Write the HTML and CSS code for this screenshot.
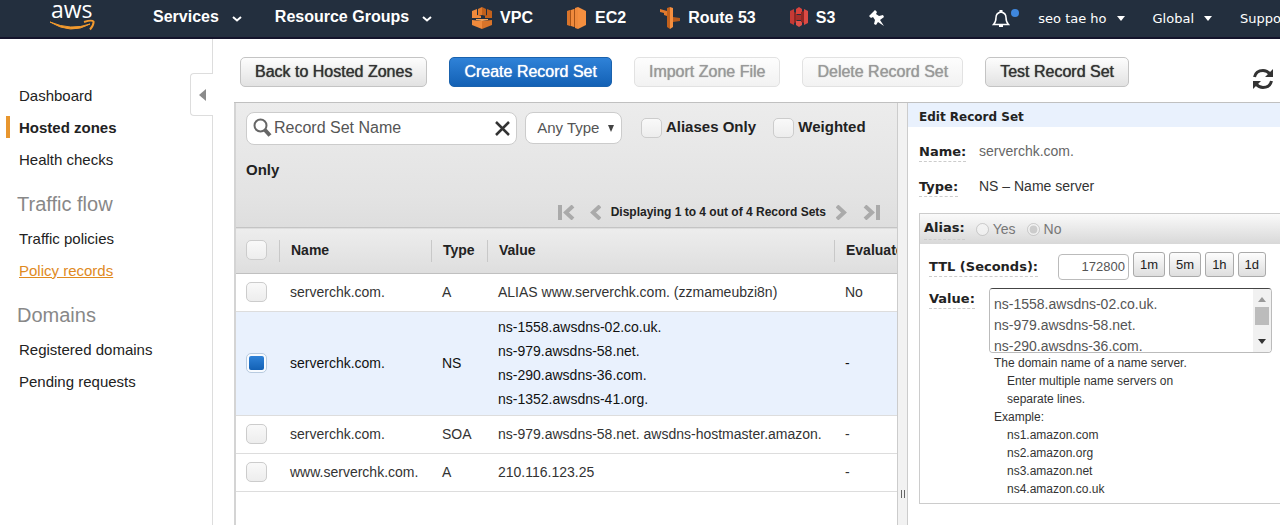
FILE: index.html
```html
<!DOCTYPE html>
<html lang="en">
<head>
<meta charset="utf-8">
<title>Route 53 Console</title>
<link rel="stylesheet" href="styles.css">
</head>
<body>
<header class="topbar">
  <a class="logo" href="#" aria-label="aws">
    <svg width="46" height="34" viewBox="0 0 46 34">
      <text class="logo-text" x="2" y="18">aws</text>
      <path d="M1 22Q22 35 41 24Q22 31 1 22Z" fill="#f29a2e" stroke="#f29a2e" stroke-width="1"/>
      <path d="M35 22Q43 19.500 44.500 21.500Q45 25 41 29.500" fill="none" stroke="#f29a2e" stroke-width="2"/>
    </svg>
  </a>
  <nav class="menus">
    <button class="menu" type="button">Services <svg class="chev" width="10" height="6" viewBox="0 0 10 6"><path d="M1 1L5 4.500L9 1" fill="none" stroke="#fff" stroke-width="2"/></svg></button>
    <button class="menu" type="button">Resource Groups <svg class="chev" width="10" height="6" viewBox="0 0 10 6"><path d="M1 1L5 4.500L9 1" fill="none" stroke="#fff" stroke-width="2"/></svg></button>
  </nav>
  <nav class="shortcuts">
    <a class="short" href="#">
      <svg width="20" height="22" viewBox="0 0 20 22"><path d="M6 2L10 0V8L6 9Z" fill="#e17a2c"/><path d="M10 0L14 2V9L10 8Z" fill="#c2611c"/><path d="M0 4L5 2V8L9 9V11H0Z" fill="#f08a3c"/><path d="M0 13L10 14V22L0 18Z" fill="#f08a3c"/><path d="M15 2L20 4V11H13V9L15 8Z" fill="#c2611c"/><path d="M20 13L10 14V22L20 18Z" fill="#d9742a"/><path d="M4 12H16V13L10 14L4 13Z" fill="#f6a55c"/></svg>VPC</a>
    <a class="short" href="#">
      <svg width="20" height="22" viewBox="0 0 20 22"><path d="M0 4L3 3V19L0 18Z" fill="#d9742a"/><path d="M4 3L7 2V20L4 19Z" fill="#f08a3c"/><path d="M8 1L11 0V22L8 21Z" fill="#f08a3c"/><path d="M11 0L19 4V18L11 22Z" fill="#f58f3f"/><path d="M3 3H4V19H3ZM7 2H8V20H7Z" fill="#a65318"/></svg>EC2</a>
    <a class="short" href="#">
      <svg width="20" height="22" viewBox="0 0 20 22"><path d="M0 2L7 4V9L4 8V6L0 5Z" fill="#e27b2e"/><path d="M7 1L10 0V22L7 20Z" fill="#c2611c"/><path d="M10 0L13 1V20L10 22Z" fill="#f58f3f"/><path d="M13 10L20 11V14L13 15Z" fill="#b4591a"/></svg>Route 53</a>
    <a class="short" href="#">
      <svg width="18" height="21" viewBox="0 0 18 21"><path d="M0 4L4 2V18L0 16Z" fill="#c53a35"/><path d="M4 5L7 6V15L4 16Z" fill="#8f2723"/><path d="M6 2L9 0L12 2V7H6Z" fill="#d9433d"/><path d="M6 8H12V13H6Z" fill="#a82f2a"/><path d="M6 14H12V18L9 20L6 18Z" fill="#e0524b"/><path d="M11 5L14 4V16L11 15Z" fill="#8f2723"/><path d="M14 2L18 4V16L14 18Z" fill="#dc4a44"/></svg>S3</a>
    <button class="icon-btn" type="button" aria-label="Edit shortcuts"><svg width="16" height="16" viewBox="0 0 16 16"><path d="M6 0L8 2L7 4L10 6L14 5L15 7L11 10L15 16L9 12L7 15L5 14L6 10L4 7L2 8L0 6Z" fill="#fff"/></svg></button>
  </nav>
  <div class="account">
    <button class="icon-btn bell" type="button" aria-label="Notifications"><svg width="18" height="18" viewBox="0 0 18 18"><path d="M1.500 14.500Q4 12 4 7.500Q4 3 9 2Q14 3 14 7.500Q14 12 16.500 14.500Z" fill="none" stroke="#fff" stroke-width="1.500"/><path d="M7.500 2V0H10.500V2ZM7 15H11V17H7Z" fill="#fff"/></svg><span class="dot"></span></button>
    <button class="acct" type="button">seo tae ho <svg width="8" height="5" viewBox="0 0 8 5"><path d="M0 0H8L4 5Z" fill="#fff"/></svg></button>
    <button class="acct" type="button">Global <svg width="8" height="5" viewBox="0 0 8 5"><path d="M0 0H8L4 5Z" fill="#fff"/></svg></button>
    <button class="acct" type="button">Support</button>
  </div>
</header>

<div class="page">
  <aside class="sidebar">
    <button class="collapse" type="button" aria-label="Collapse navigation"><svg width="7" height="12" viewBox="0 0 7 12"><path d="M7 0V12L0 6Z" fill="#8b8b8b"/></svg></button>
    <nav class="side-nav">
      <a href="#">Dashboard</a>
      <a class="current" href="#">Hosted zones</a>
      <a href="#">Health checks</a>
      <h2>Traffic flow</h2>
      <a href="#">Traffic policies</a>
      <a class="hover" href="#">Policy records</a>
      <h2>Domains</h2>
      <a href="#">Registered domains</a>
      <a href="#">Pending requests</a>
    </nav>
  </aside>

  <main class="main">
    <div class="toolbar">
      <button class="btn" type="button">Back to Hosted Zones</button>
      <button class="btn primary" type="button">Create Record Set</button>
      <button class="btn" type="button" disabled>Import Zone File</button>
      <button class="btn" type="button" disabled>Delete Record Set</button>
      <button class="btn" type="button">Test Record Set</button>
      <button class="icon-btn refresh" type="button" aria-label="Refresh"><svg width="22" height="22" viewBox="0 0 22 22"><path d="M2.500 9Q4 2.500 11 2.500Q15 2.500 18 6M19.500 13Q18 19.500 11 19.500Q7 19.500 4 16" fill="none" stroke="#333" stroke-width="3"/><path d="M21 1V9H13ZM1 21V13H9Z" fill="#333"/></svg></button>
    </div>

    <div class="split">
      <section class="list">
        <div class="filters">
          <div class="search">
            <svg width="19" height="20" viewBox="0 0 19 20"><circle cx="7.500" cy="7.500" r="6" fill="none" stroke="#666" stroke-width="2"/><path d="M12 12L17 17.500" stroke="#666" stroke-width="4"/></svg>
            <input type="text" placeholder="Record Set Name" aria-label="Record Set Name">
            <button class="icon-btn" type="button" aria-label="Clear"><svg width="15" height="15" viewBox="0 0 15 15"><path d="M1 1L14 14M14 1L1 14" stroke="#333" stroke-width="2.500"/></svg></button>
          </div>
          <span class="select"><select aria-label="Record type"><option>Any Type</option></select><svg width="6" height="7" viewBox="0 0 6 7"><path d="M0 0H6L3 7Z" fill="#444"/></svg></span>
          <label><input class="check" type="checkbox"> Aliases Only</label>
          <label><input class="check" type="checkbox"> Weighted Only</label>
        </div>
        <div class="pager">
          <button class="icon-btn" type="button" aria-label="First page"><svg width="17" height="15" viewBox="0 0 17 15"><path d="M2 0V15M15 1L8 7.500L15 14" fill="none" stroke="#aaa" stroke-width="4"/></svg></button>
          <button class="icon-btn" type="button" aria-label="Previous page"><svg width="11" height="15" viewBox="0 0 11 15"><path d="M10 1L3 7.500L10 14" fill="none" stroke="#aaa" stroke-width="4"/></svg></button>
          <span>Displaying 1 to 4 out of 4 Record Sets</span>
          <button class="icon-btn" type="button" aria-label="Next page"><svg width="11" height="15" viewBox="0 0 11 15"><path d="M1 1L8 7.500L1 14" fill="none" stroke="#aaa" stroke-width="4"/></svg></button>
          <button class="icon-btn" type="button" aria-label="Last page"><svg width="17" height="15" viewBox="0 0 17 15"><path d="M15 0V15M2 1L9 7.500L2 14" fill="none" stroke="#aaa" stroke-width="4"/></svg></button>
        </div>
        <table class="records">
          <colgroup><col class="c-check"><col class="c-name"><col class="c-type"><col class="c-value"><col class="c-eval"></colgroup>
          <thead>
            <tr><th><input class="check" type="checkbox" aria-label="Select all"></th><th>Name</th><th>Type</th><th>Value</th><th>Evaluate</th></tr>
          </thead>
          <tbody>
            <tr><td><input class="check" type="checkbox" aria-label="Select record 1"></td><td>serverchk.com.</td><td>A</td><td>ALIAS www.serverchk.com. (zzmameubzi8n)</td><td>No</td></tr>
            <tr class="selected"><td><input class="check" type="checkbox" aria-label="Select record 2" checked></td><td>serverchk.com.</td><td>NS</td><td>ns-1558.awsdns-02.co.uk.<br>ns-979.awsdns-58.net.<br>ns-290.awsdns-36.com.<br>ns-1352.awsdns-41.org.</td><td>-</td></tr>
            <tr><td><input class="check" type="checkbox" aria-label="Select record 3"></td><td>serverchk.com.</td><td>SOA</td><td>ns-979.awsdns-58.net. awsdns-hostmaster.amazon.</td><td>-</td></tr>
            <tr><td><input class="check" type="checkbox" aria-label="Select record 4"></td><td>www.serverchk.com.</td><td>A</td><td>210.116.123.25</td><td>-</td></tr>
          </tbody>
        </table>
      </section>

      <div class="splitter"><span></span></div>

      <form class="editor">
        <h1>Edit Record Set</h1>
        <div class="field"><span class="key"><b>Name:</b></span><span class="muted">serverchk.com.</span></div>
        <div class="field"><span class="key"><b>Type:</b></span><span>NS – Name server</span></div>
        <div class="box">
          <div class="alias">
            <b>Alias:</b>
            <label><input type="radio" name="alias" disabled>Yes</label>
            <label><input type="radio" name="alias" disabled checked>No</label>
          </div>
          <div class="ttl">
            <label for="ttl"><b>TTL (Seconds):</b></label>
            <input id="ttl" type="text" value="172800">
            <button type="button">1m</button>
            <button type="button">5m</button>
            <button type="button">1h</button>
            <button type="button">1d</button>
          </div>
          <div class="value">
            <label for="value"><b>Value:</b></label>
            <div class="value-body">
              <div class="area">
                <textarea id="value">ns-1558.awsdns-02.co.uk.
ns-979.awsdns-58.net.
ns-290.awsdns-36.com.
ns-1352.awsdns-41.org.</textarea>
                <div class="scroll">
                  <svg width="8" height="5" viewBox="0 0 8 5"><path d="M0 5H8L4 0Z" fill="#999"/></svg>
                  <span class="thumb"></span>
                  <svg class="down" width="8" height="5" viewBox="0 0 8 5"><path d="M0 0H8L4 5Z" fill="#333"/></svg>
                </div>
              </div>
              <div class="help">
                <p>The domain name of a name server.</p>
                <p class="indent">Enter multiple name servers on<br>separate lines.</p>
                <p>Example:</p>
                <p class="indent">ns1.amazon.com<br>ns2.amazon.org<br>ns3.amazon.net<br>ns4.amazon.co.uk</p>
              </div>
            </div>
          </div>
        </div>
      </form>
    </div>
  </main>
</div>
</body>
</html>
```
FILE: styles.css
```css
* { box-sizing: border-box; }
html, body { height: 100%; }
body {
  margin: 0;
  display: flex;
  flex-direction: column;
  overflow: hidden;
  background: #fff;
  color: #333;
  font: 14px/20px "Liberation Sans", Arial, sans-serif;
}
button, input, select, textarea { font: inherit; color: inherit; margin: 0; }
button { padding: 0; border: 0; background: none; white-space: nowrap; }
svg { display: block; flex: none; }
a { color: inherit; text-decoration: none; }
.icon-btn { display: flex; align-items: center; }

.topbar {
  display: flex;
  flex: none;
  height: 39px;
  overflow: hidden;
  padding-left: 49px;
  background: #232f3e;
  border-bottom: 2px solid #14142b;
  color: #fff;
  font-size: 16px;
  font-weight: bold;
}
.topbar > * { flex: none; display: flex; }
.logo-text { font: 500 23px "Open Sans", sans-serif; fill: #fff; }
.menus { margin-left: 58px; gap: 33px; padding-bottom: 4px; }
.menu { display: flex; align-items: center; gap: 13px; font-weight: bold; }
.chev { margin-top: 5px; }
.shortcuts { margin-left: 40px; gap: 34px; padding-bottom: 2px; }
.short { display: flex; align-items: center; gap: 8px; }
.account { margin-left: 107px; gap: 28px; font: 13px "DejaVu Sans", sans-serif; }
.bell { position: relative; }
.dot {
  position: absolute;
  top: 9px;
  right: -9px;
  width: 8px;
  height: 8px;
  border-radius: 50%;
  background: #3f87dd;
}
.acct { display: flex; align-items: center; gap: 10px; }

.page { display: flex; flex: 1; min-height: 0; }
.sidebar {
  position: relative;
  flex: none;
  width: 213px;
  padding-top: 41px;
  border-right: 1px solid #ddd;
}
.collapse {
  position: absolute;
  top: 34px;
  right: -1px;
  display: flex;
  align-items: center;
  width: 23px;
  height: 43px;
  padding-left: 8px;
  background: #fff;
  border: 1px solid #ddd;
  border-right: 0;
  border-radius: 4px 0 0 4px;
}
.side-nav a {
  display: block;
  margin-left: 6px;
  padding-left: 13px;
  font-size: 15px;
  line-height: 32px;
  color: #222;
}
.side-nav .current {
  font-weight: bold;
  background: linear-gradient(#e8962e, #e8962e) 0 4px / 4px 22px no-repeat;
}
.side-nav .hover { color: #e08a1e; text-decoration: underline; }
.side-nav h2 {
  margin: 12px 0 3px 17px;
  font-size: 20px;
  font-weight: normal;
  line-height: 32px;
  color: #888;
}

.main { display: flex; flex: 1; flex-direction: column; min-width: 0; }
.toolbar { display: flex; flex: none; gap: 22px; height: 63px; padding: 18px 6px 0 27px; }
.btn {
  height: 30px;
  padding: 0 14px;
  border: 1px solid #c4c4c4;
  border-radius: 5px;
  background: linear-gradient(#fdfdfd, #e2e2e2);
  color: #333;
  font-size: 16px;
  text-shadow: 0 0 1px currentColor;
}
.btn.primary { background: linear-gradient(#2f82d8, #1361b5); border-color: #1a62ad; color: #fff; }
.btn:disabled { background: linear-gradient(#fdfdfd, #f2f2f2); border-color: #e2e2e2; color: #999; }
.refresh { align-self: flex-end; margin: 0 0 12px auto; }

.split {
  display: grid;
  flex: 1;
  grid-template-columns: minmax(0, 1fr) 10px 372px;
  min-height: 0;
  margin-left: 21px;
  border-top: 1px solid #c0c0c0;
}
.list {
  overflow: hidden;
  border-left: 2px solid #d4d4d4;
  border-right: 1px solid #ccc;
  background: #fff;
}
.filters {
  height: 94px;
  padding: 2px 10px 0;
  background: linear-gradient(#ececec, #e3e3e3);
  color: #222;
  font-size: 15px;
  font-weight: bold;
  line-height: 43px;
}
.search {
  display: inline-flex;
  align-items: center;
  width: 271px;
  height: 33px;
  margin-right: 4px;
  padding: 0 6px;
  gap: 2px;
  vertical-align: middle;
  border: 1px solid #ccc;
  border-radius: 8px;
  background: #fff;
  font-size: 16px;
  line-height: 20px;
  font-weight: normal;
}
.search input { flex: 1; min-width: 0; padding: 0; border: 0; outline: 0; background: none; }
.search input::placeholder { color: #555; opacity: 1; }
.select { position: relative; display: inline-block; margin-right: 15px; vertical-align: middle; line-height: 20px; }
.select select {
  appearance: none;
  display: block;
  width: 97px;
  height: 32px;
  padding: 0 11px;
  border: 1px solid #ccc;
  border-radius: 8px;
  background: #fff;
  color: #555;
  font-weight: normal;
}
.select svg { position: absolute; top: 13px; right: 8px; }
.filters label { margin-right: 13px; }
.check {
  appearance: none;
  display: inline-block;
  width: 21px;
  height: 20px;
  border: 1px solid #ccc;
  border-radius: 5px;
  background: linear-gradient(#f9f9f9, #ededed);
  vertical-align: middle;
}
.check:checked { border-color: #b8cbe0; background: linear-gradient(#2f82d8, #1361b5) content-box, #f8fbff; padding: 2px; }
.pager {
  display: flex;
  align-items: center;
  justify-content: flex-end;
  gap: 10px;
  height: 30px;
  padding-right: 17px;
  background: linear-gradient(#e3e3e3, #dedede);
  color: #222;
  font-size: 12px;
  font-weight: bold;
}
.pager button:first-child { margin-right: 5px; }
.pager button:last-child { margin-left: 6px; }

.records { width: calc(100% + 60px); table-layout: fixed; border-collapse: collapse; line-height: 24px; }
.records .check { display: block; }
.c-check { width: 43px; }
.c-name { width: 152px; }
.c-type { width: 56px; }
.c-eval { width: 123px; }
.records th, .records td { padding: 2px 0 3px 11px; text-align: left; white-space: nowrap; }
.records thead { background: linear-gradient(#ededed, #dedede); border-top: 1px solid #c4c4c4; border-bottom: 1px solid #c0c0c0; }
.records th { height: 46px; color: #222; background: linear-gradient(#c8c8c8, #c8c8c8) 0 center / 1px 22px no-repeat; }
.records th:first-child { background: none; }
.records th:first-child, .records td:first-child { padding-left: 10px; }
.records th:nth-child(n+2) { padding-left: 12px; }
.records td { height: 38px; border-bottom: 1px solid #ddd; }
.records .selected { background: #e9f1fd; color: #111; }
.records .selected td { height: 104px; }

.splitter {
  display: flex;
  justify-content: center;
  padding-top: 387px;
  background: #f2f2f2;
  border-right: 1px solid #ccc;
}
.splitter span { width: 4px; height: 8px; border: solid #666; border-width: 0 1px; }

.editor { overflow: hidden; }
.editor b {
  padding-bottom: 2px;
  border-bottom: 1px dashed #ccc;
  color: #222;
  font: bold 13px/18px "DejaVu Sans", sans-serif;
}
.editor h1 {
  margin: 0 0 6px;
  padding: 5px 11px 0;
  background: #e9f1fd;
  color: #222;
  font: bold 12px/19px "DejaVu Sans", sans-serif;
}
.field { display: flex; align-items: center; height: 35px; padding-left: 11px; }
.key { width: 60px; }
.muted { color: #666; }
.box { margin: 10px 0 0 11px; padding-bottom: 5px; border: 1px solid #ccc; border-right: 0; }
.alias {
  display: flex;
  align-items: center;
  gap: 11px;
  height: 30px;
  padding-left: 4px;
  background: linear-gradient(#fafafa, #d8d8d8);
}
.alias label { display: flex; align-items: center; gap: 4px; color: #777; }
.alias input { width: 13px; height: 13px; }
.ttl { display: flex; align-items: center; gap: 4px; padding: 8px 0 0 9px; font-size: 13px; }
.ttl label { flex: none; width: 125px; }
.ttl input {
  width: 71px;
  height: 26px;
  padding: 0 3px;
  border: 1px solid #bbb;
  border-radius: 4px;
  color: #555;
  text-align: right;
}
.ttl button {
  height: 25px;
  min-width: 28px;
  padding: 0 6px;
  margin-bottom: 4px;
  border: 1px solid #aaa;
  border-radius: 3px;
  background: linear-gradient(#fdfdfd, #dedede);
  color: #222;
}
.value { display: flex; padding: 7px 8px 0 9px; }
.value label { flex: none; width: 60px; }
.value-body { flex: 1; min-width: 0; }
.area {
  display: flex;
  height: 65px;
  overflow: hidden;
  border: 1px solid #bbb;
  border-top-color: #444;
  border-radius: 4px;
}
.area textarea {
  flex: 1;
  min-width: 0;
  padding: 5px 4px;
  border: 0;
  outline: 0;
  resize: none;
  overflow: hidden;
  color: #555;
  line-height: 21px;
}
.scroll { display: flex; flex-direction: column; align-items: center; width: 18px; padding: 8px 0; background: #f1f1f1; }
.thumb { width: 14px; height: 18px; margin-top: 5px; background: #bcbcbc; }
.down { margin-top: auto; }
.help { padding: 1px 0 0 5px; font-size: 12px; line-height: 18px; }
.help p { margin: 0; }
.help .indent { padding-left: 13px; }
```
